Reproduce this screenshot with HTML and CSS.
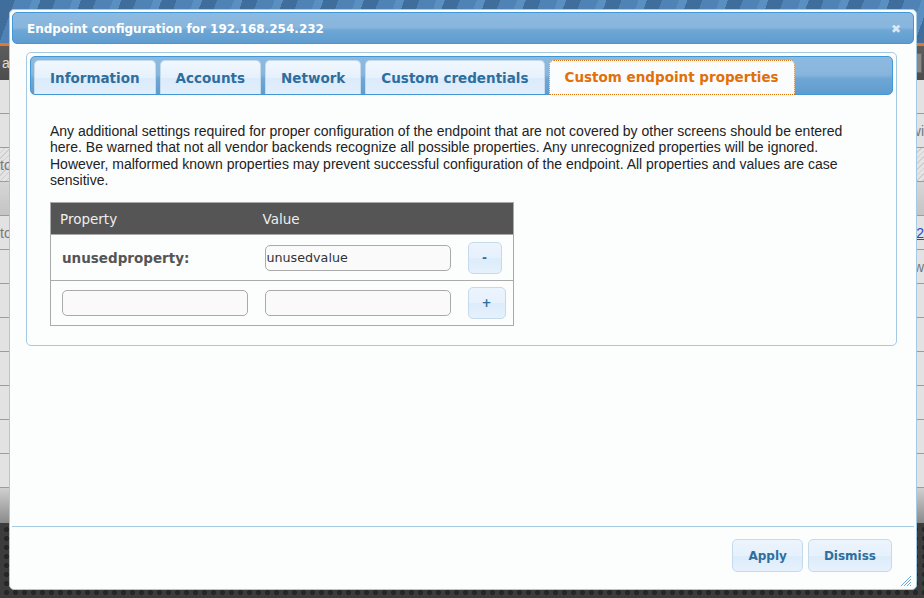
FILE: index.html
```html
<!DOCTYPE html>
<html>
<head>
<meta charset="utf-8">
<link rel="stylesheet" href="styles.css">
</head>
<body>
<div class="page">
  <div class="topbar"></div>
  <div class="accent"></div>
  <div class="toolbar"><span class="tb-text">a</span><span class="tb-btn"></span></div>
  <div class="rows">
    <div class="row"></div>
    <div class="row"><span class="row-text right">wi</span></div>
    <div class="row hatched"><span class="row-text">to</span></div>
    <div class="row dark"></div>
    <div class="row"><span class="row-text">to</span><span class="row-link">92</span></div>
    <div class="row"><span class="row-text right">w</span></div>
    <div class="row"></div>
    <div class="row"></div>
    <div class="row"></div>
    <div class="row"></div>
    <div class="row"></div>
    <div class="row"></div>
  </div>
  <div class="fade"></div>
  <div class="dots"></div>
</div>

<div class="dialog">
  <div class="titlebar">
    <span class="title">Endpoint configuration for 192.168.254.232</span>
    <span class="close">&#x2716;</span>
  </div>
  <div class="dialog-content">
    <div class="tabs">
      <ul class="tab-nav">
        <li class="tab">Information</li>
        <li class="tab">Accounts</li>
        <li class="tab">Network</li>
        <li class="tab">Custom credentials</li>
        <li class="tab active">Custom endpoint properties</li>
      </ul>
      <div class="tab-panel">
        <p class="intro">Any additional settings required for proper configuration of the endpoint that are not covered by other screens should be entered here. Be warned that not all vendor backends recognize all possible properties. Any unrecognized properties will be ignored. However, malformed known properties may prevent successful configuration of the endpoint. All properties and values are case sensitive.</p>
        <table class="props">
          <colgroup><col class="c1"><col class="c2"><col class="c3"></colgroup>
          <thead>
            <tr><th>Property</th><th>Value</th><th></th></tr>
          </thead>
          <tbody>
            <tr class="r1">
              <td class="prop-name">unusedproperty:</td>
              <td><input class="field" type="text" value="unusedvalue"></td>
              <td><button class="btn small">-</button></td>
            </tr>
            <tr class="r2">
              <td><input class="field" type="text" value=""></td>
              <td><input class="field" type="text" value=""></td>
              <td><button class="btn small plus">+</button></td>
            </tr>
          </tbody>
        </table>
      </div>
    </div>
  </div>
  <div class="dialog-footer">
    <button class="btn big apply">Apply</button>
    <button class="btn big">Dismiss</button>
  </div>
  <svg class="grip" width="12" height="12" viewBox="0 0 12 12">
    <path d="M11 1 L1 11 M11 4 L4 11 M11 7 L7 11 M11 10 L10 11" stroke="#6fa8dc" stroke-width="1" fill="none"/>
  </svg>
</div>
</body>
</html>
```
FILE: styles.css
```css
html, body {
  margin: 0;
  padding: 0;
}
body {
  width: 924px;
  height: 598px;
  overflow: hidden;
  position: relative;
  font-family: "DejaVu Sans", sans-serif;
  background: #3a3a3a;
}

/* background page */
.page {
  display: flex;
  flex-direction: column;
  height: 598px;
}
.topbar {
  height: 43px;
  background: repeating-linear-gradient(110deg, #3f6e9c 0px, #3f6e9c 14px, #4f82b5 14px, #4f82b5 30px, #5a8fc2 30px, #5a8fc2 38px);
}
.accent {
  height: 3px;
  background: #e8772e;
}
.toolbar {
  height: 34px;
  background: linear-gradient(#5d5d5d, #4d4d4d);
  display: flex;
  align-items: center;
  justify-content: space-between;
  padding: 0 2px;
}
.tb-text {
  color: #ddd;
  font-family: "Liberation Sans", sans-serif;
  font-size: 14px;
}
.tb-btn {
  width: 14px;
  height: 18px;
  background: #888;
  border: 1px solid #666;
}
.rows {
  display: flex;
  flex-direction: column;
}
.row {
  height: 33px;
  border-bottom: 1px solid #9c9c9c;
  background: #e2e2e2;
  display: flex;
  align-items: center;
  justify-content: space-between;
  font-family: "Liberation Sans", sans-serif;
  font-size: 14px;
  color: #777;
}
.row.hatched {
  background: repeating-linear-gradient(135deg, #e4e4e4 0px, #e4e4e4 3px, #cfcfcf 3px, #cfcfcf 4px);
}
.row.dark {
  background: linear-gradient(#d6d6d6, #c4c4c4);
}
.row-text.right {
  margin-left: auto;
}
.row-link {
  color: #3344cc;
  text-decoration: underline;
}
.fade {
  height: 35px;
  background: linear-gradient(#d0d0d0, #8a8a8a);
}
.dots {
  flex: 1;
  background-color: #3c3c3c;
  background-image: radial-gradient(circle, #262626 2.4px, transparent 2.8px);
  background-size: 9px 9px;
  background-position: 2px 2px;
}

/* dialog */
.dialog {
  position: absolute;
  left: 9px;
  top: 9px;
  width: 908px;
  height: 581px;
  box-sizing: border-box;
  border: 1px solid #a6c9e2;
  border-radius: 5px;
  background: #fcfdfd;
  padding: 2px;
  display: flex;
  flex-direction: column;
}
.titlebar {
  height: 32px;
  box-sizing: border-box;
  border: 1px solid #4297d7;
  border-radius: 5px;
  background: linear-gradient(#8dbae0 0%, #87b5dc 48%, #6ea7d5 58%, #5f9ccf 100%);
  display: flex;
  align-items: center;
  justify-content: space-between;
  padding: 0 12px 0 14px;
  color: #fff;
}
.title {
  font-weight: bold;
  font-size: 12px;
  position: relative;
  top: 1px;
}
.close {
  font-size: 12px;
  color: #dce9f5;
  position: relative;
  top: 1px;
}
.dialog-content {
  flex: 1;
  padding: 8px 17px 0 14px;
}
.tabs {
  border: 1px solid #a6c9e2;
  border-radius: 5px;
  padding: 3px;
  background: #fcfdfd;
}
.tab-nav {
  list-style: none;
  margin: 0;
  height: 39px;
  box-sizing: border-box;
  padding: 3px 0 0 3px;
  border: 1px solid #4297d7;
  border-radius: 5px;
  background: linear-gradient(#8dbae0 0%, #87b5dc 48%, #6ea7d5 58%, #5f9ccf 100%);
  display: flex;
  align-items: flex-start;
  gap: 4px;
}
.tab {
  height: 34px;
  box-sizing: border-box;
  padding: 0 15px;
  border: 1px solid #c5dbec;
  border-bottom: none;
  border-radius: 5px 5px 0 0;
  background: linear-gradient(#f1f7fe 0%, #e6f1fc 50%, #dbebfb 52%, #e2eefb 100%);
  color: #2e6e9e;
  font-weight: bold;
  font-size: 13.5px;
  line-height: 34px;
  white-space: nowrap;
}
.tab.active {
  height: 35px;
  margin-bottom: -1px;
  background: #fbfcfd;
  border: 1px dotted #e17009;
  color: #e17009;
  line-height: 33px;
}
.tab-panel {
  padding: 14px 20px 16px 20px;
}
.intro {
  margin: 14px 0 14px 0;
  font-family: "Liberation Sans", sans-serif;
  font-size: 14px;
  line-height: 16.33px;
  color: #222;
}
.props {
  border-collapse: collapse;
  table-layout: fixed;
  width: 464px;
  border: 1px solid #aaa;
}
.props col.c1 { width: 203px; }
.props col.c2 { width: 204px; }
.props th {
  height: 32px;
  background: #555;
  color: #eee;
  font-weight: normal;
  font-size: 13.5px;
  text-align: left;
  padding: 0 0 0 9px;
  box-sizing: border-box;
}
.props td {
  padding: 0 0 0 11px;
  border-top: 1px solid #aaa;
  vertical-align: middle;
}
.props .r1 td { height: 45px; }
.props .r2 td { height: 44px; }
.props td:last-child { padding-left: 10px; }
.prop-name {
  font-weight: bold;
  font-size: 13.5px;
  color: #555;
}
.field {
  display: block;
  width: 186px;
  height: 26px;
  box-sizing: border-box;
  margin: 0;
  border: 1px solid #aaa;
  border-radius: 5px;
  background: #fafafa;
  font-family: "DejaVu Sans", sans-serif;
  font-size: 12.7px;
  color: #333;
  padding: 0 1px;
}
.btn {
  display: block;
  box-sizing: border-box;
  border: 1px solid #c5dbec;
  border-radius: 5px;
  background: linear-gradient(#ecf4fd 0%, #e6f1fc 50%, #dcecfb 52%, #e6f1fc 100%);
  color: #2e6e9e;
  font-family: "DejaVu Sans", sans-serif;
  font-weight: bold;
  font-size: 12px;
  padding: 0;
  margin: 0;
}
.btn.small {
  width: 34px;
  height: 32px;
}
.btn.small.plus {
  width: 38px;
}
.dialog-footer {
  border-top: 1px solid #a6c9e2;
  height: 61px;
  box-sizing: border-box;
  padding: 12px 22px 15px 0;
  display: flex;
  justify-content: flex-end;
  gap: 5px;
}
.btn.big {
  height: 33px;
  padding: 0 15px;
}
.grip {
  position: absolute;
  right: 4px;
  bottom: 2px;
}
```
